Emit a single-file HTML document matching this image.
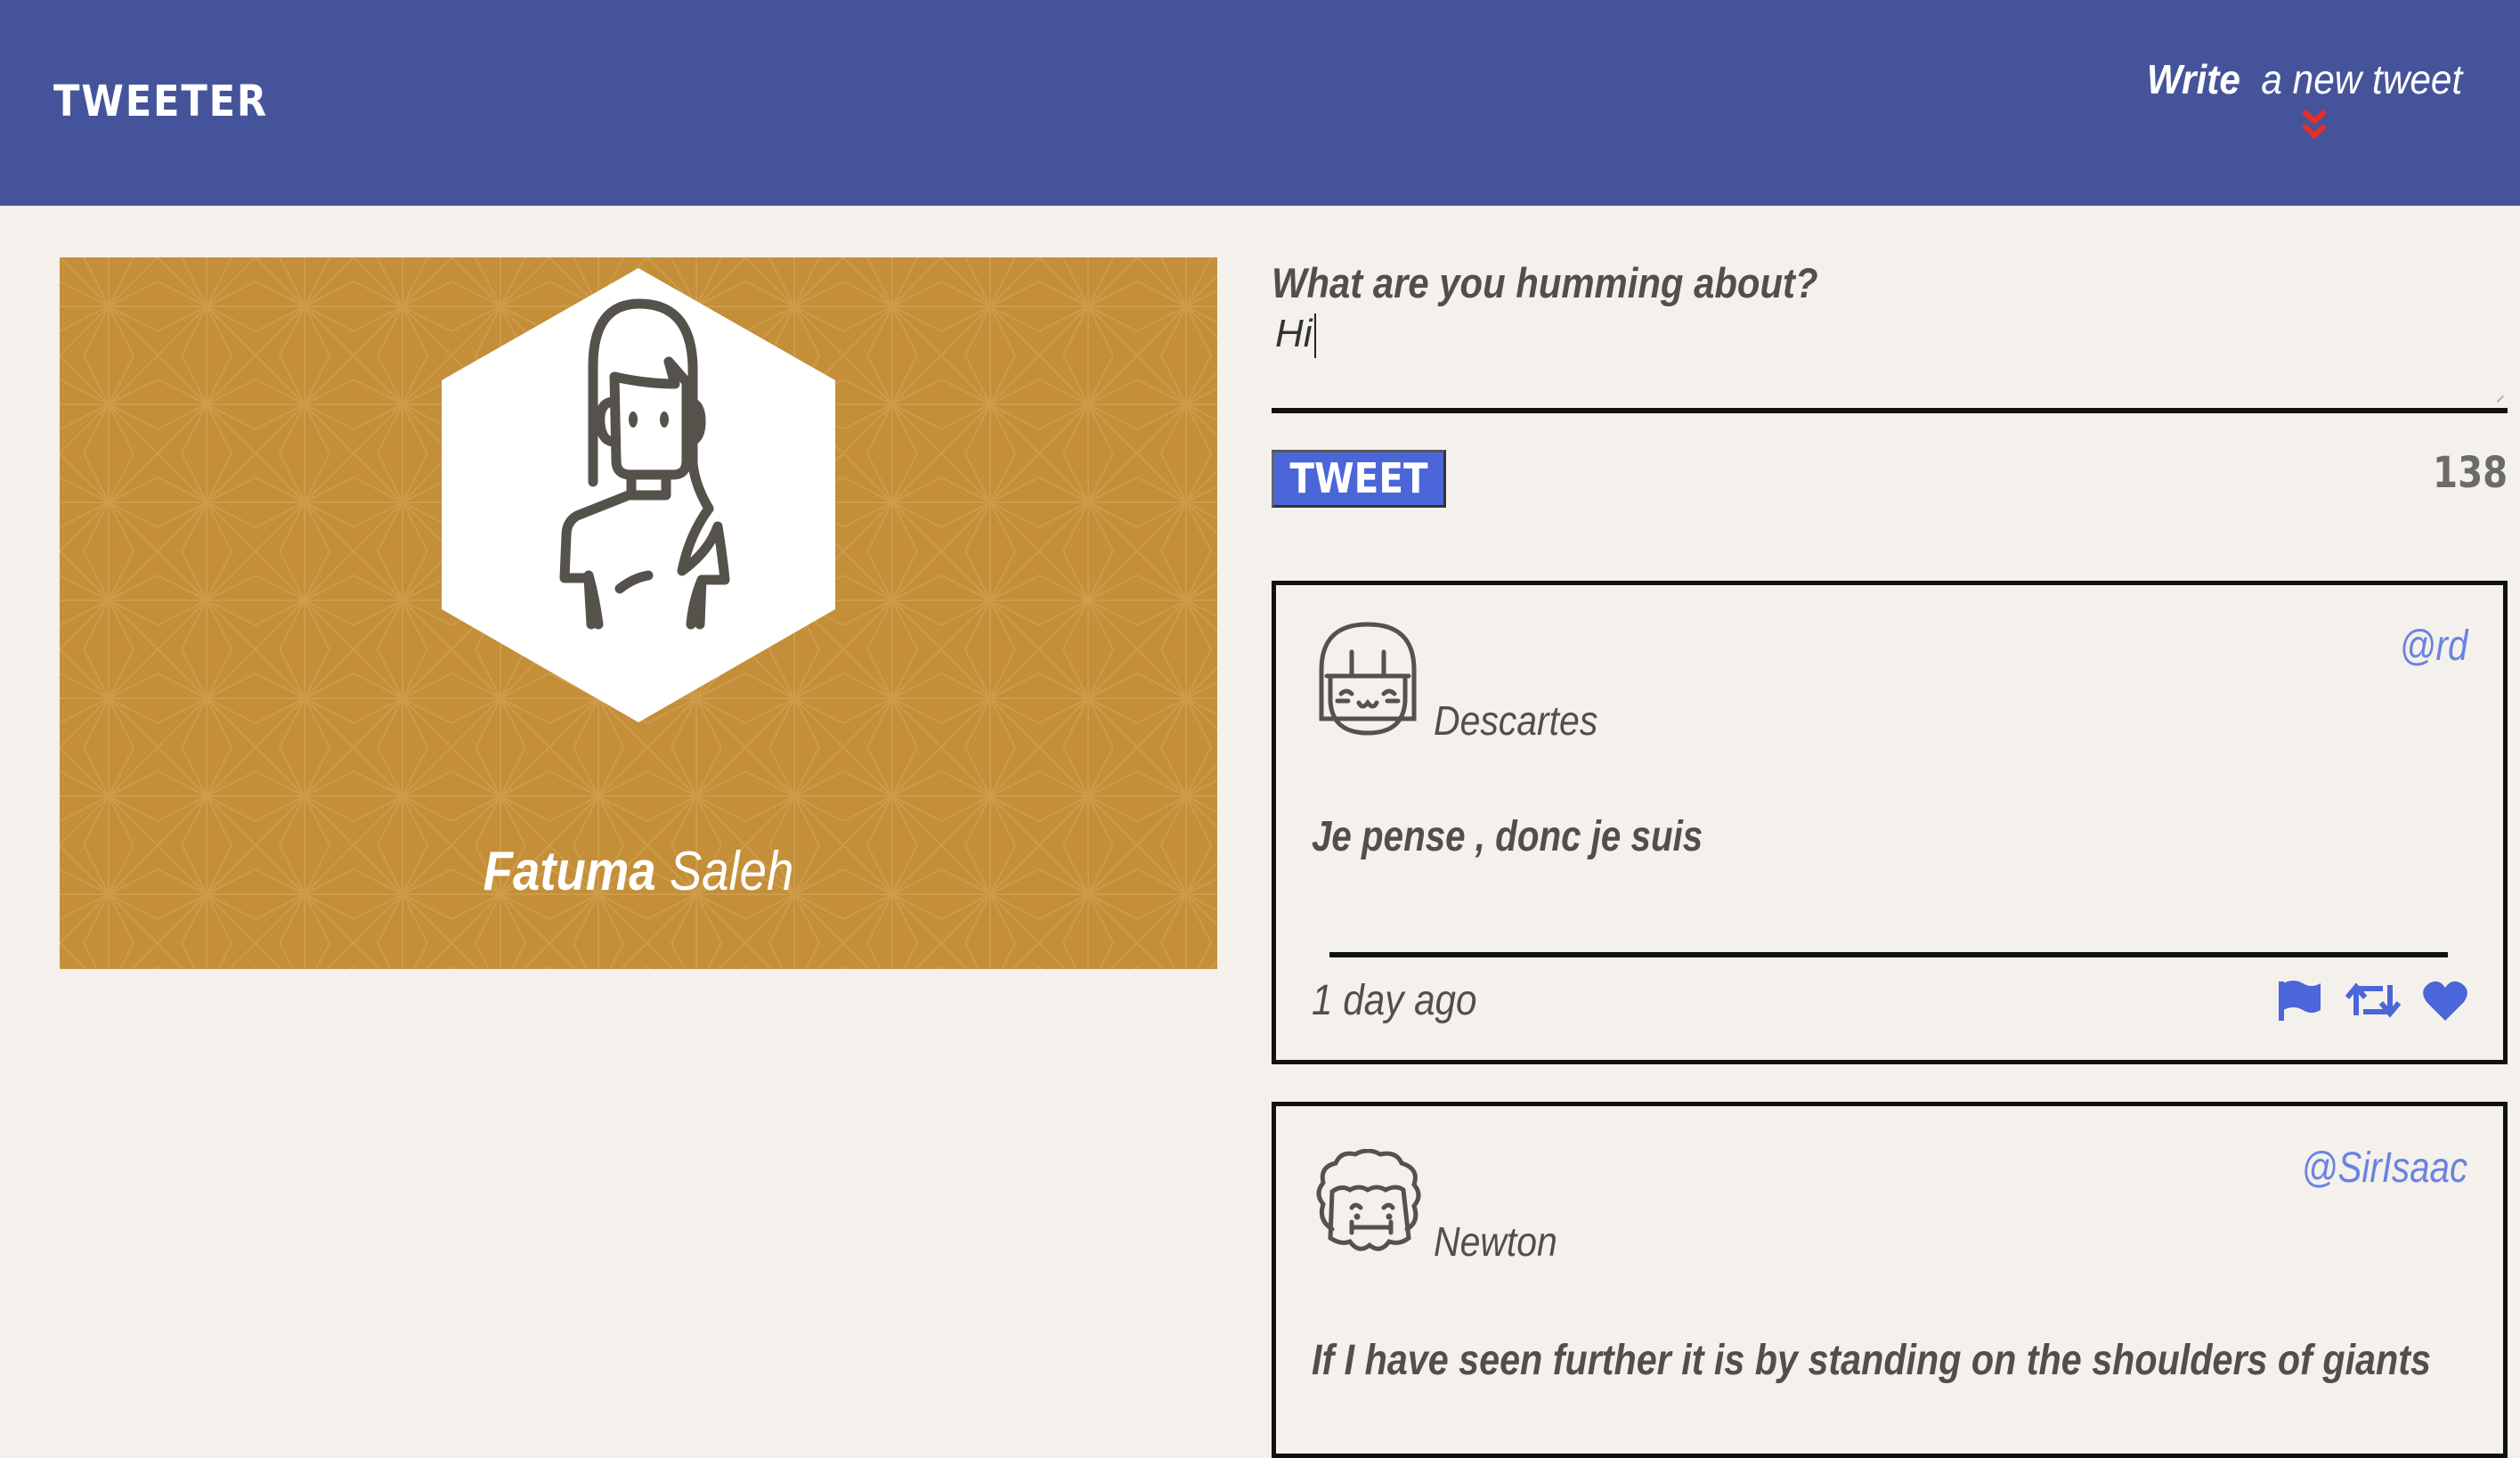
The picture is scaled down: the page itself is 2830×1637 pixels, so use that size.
<!DOCTYPE html>
<html><head><meta charset="utf-8">
<style>
*{margin:0;padding:0;box-sizing:border-box}
body{width:2830px;height:1567px;overflow:hidden;background:#f4f1ec;font-family:"Liberation Sans",sans-serif;color:#524f49;position:relative}
.a{position:absolute;white-space:nowrap}
.sq{transform:scaleX(.84);transform-origin:left top;display:block}
.sqr{transform:scaleX(.84);transform-origin:right top;display:block}
.sqc{transform:scaleX(.84);transform-origin:center top;display:block}
</style></head><body>
<div class="a" style="left:0;top:0;width:2830px;height:231px;background:#45549a"></div>
<div class="a" style="left:60px;top:86px;font-size:48px;font-weight:900;color:#fff;letter-spacing:2px;font-family:'DejaVu Sans','Liberation Sans',sans-serif"><span class="sq" style="transform:scaleX(.9)">TWEETER</span></div>
<div class="a" style="right:65px;top:62px;font-size:46px;color:#fff;font-style:italic;text-align:right"><span class="sqr" style="transform:scaleX(.92)"><b>Write</b>&nbsp; <span style="font-weight:300">a new tweet</span></span></div>
<svg class="a" style="left:2584px;top:122px" width="30" height="36" viewBox="0 0 30 36"><path d="M3 3 L15 14 L27 3 M3 19 L15 30 L27 19" stroke="#e2302a" stroke-width="6" fill="none"/></svg>

<div class="a" style="left:67px;top:289px;width:1300px;height:799px;background:#c48f38;overflow:hidden">
<svg width="1300" height="799" style="position:absolute;left:0;top:0;opacity:.18"><defs><pattern id="p" width="110" height="110" patternUnits="userSpaceOnUse"><path d="M0 0L110 110M110 0L0 110M55 0L55 110M0 55L110 55M0 27L110 83M0 83L110 27M27 0L83 110M83 0L27 110" stroke="#f0d7a0" stroke-width="2" fill="none"/></pattern></defs><rect width="1300" height="799" fill="url(#p)"/></svg>
</div>
<svg class="a" style="left:496px;top:301px" width="442" height="510" viewBox="0 0 442 510"><polygon points="221,0 442,126 442,383 221,510 0,383 0,126" fill="#fff"/>
<g stroke="#55524b" stroke-width="11" fill="none" stroke-linecap="round" stroke-linejoin="round">
<path d="M170 240 V110 Q170 40 222 40 Q280 40 282 110 V220 Q285 245 300 270"/>
<path d="M194 122 L196 216 Q196 232 212 232 H260 Q275 232 275 216 V128 L255 105 L262 130 Q230 130 194 122 Z"/>
<path d="M194 150 Q176 150 178 175 Q180 195 194 195 M276 150 Q292 150 291 175 Q290 195 276 195"/>
<path d="M213 236 V255 M252 236 V255 M213 255 H252"/>
<path d="M210 255 L152 278 Q140 285 140 300 L138 348 H165 L168 400 M165 345 Q172 370 176 400"/>
<path d="M300 270 Q278 300 270 340 Q300 318 310 290 Q315 320 318 350 H292 L290 400 M292 350 Q282 375 280 400"/>
<path d="M232 345 Q215 348 200 360"/>
</g>
<g fill="#55524b"><ellipse cx="215" cy="170" rx="5" ry="9"/><ellipse cx="250" cy="170" rx="5" ry="9"/></g>
</svg>
<div class="a" style="left:367px;top:943px;width:700px;text-align:center;font-size:62px;color:#fff;font-style:italic"><span class="sqc" style="transform:scaleX(.88)"><b>Fatuma</b> <span style="font-weight:300">Saleh</span></span></div>

<div class="a" style="left:1428px;top:290px;font-size:47px;font-weight:bold;font-style:italic"><span class="sq" style="transform:scaleX(.89)">What are you humming about?</span></div>
<div class="a" style="left:1432px;top:350px;font-size:44px;font-style:italic;color:#333;font-weight:300">Hi<span style="display:inline-block;width:2px;height:50px;background:#222;vertical-align:middle;margin-left:2px"></span></div>
<div class="a" style="left:1428px;top:458px;width:1388px;height:6px;background:#111"></div>
<div class="a" style="left:2800px;top:440px;width:10px;height:10px;border-bottom:2px solid #888;transform:rotate(-45deg);opacity:.6"></div>

<div class="a" style="left:1428px;top:505px;width:196px;height:65px;background:#4a66d8;border:3px solid #333;border-top-color:#555;border-left-color:#666;color:#fff;font-size:46px;font-weight:900;font-family:'DejaVu Sans',sans-serif;text-align:center;line-height:58px"><span class="sqc" style="transform:scaleX(.88)">TWEET</span></div>
<div class="a" style="right:14px;top:503px;text-align:right;font-size:48px;font-weight:900;color:#6b6b6b;font-family:'DejaVu Sans',sans-serif"><span class="sqr">138</span></div>

<!-- card 1 -->
<div class="a" style="left:1428px;top:652px;width:1388px;height:543px;border:5px solid #111"></div>
<svg class="a" style="left:1480px;top:697px" width="112" height="130" viewBox="0 0 112 130"><g stroke="#55524b" stroke-width="5" fill="none" stroke-linecap="round"><path d="M4 110 V55 Q4 4 56 4 Q108 4 108 55 V110 Z"/><path d="M10 62 H102 M38 35 V60 M74 35 V60"/><path d="M14 62 V90 Q16 126 56 126 Q96 126 98 90 V62"/><path d="M26 82 Q32 76 38 82 M74 82 Q80 76 86 82 M22 90 H34 M78 90 H90 M46 92 Q50 100 56 92 Q62 100 66 92"/></g></svg>
<div class="a" style="left:1610px;top:782px;font-size:46px;font-style:italic;font-weight:300"><span class="sq" style="transform:scaleX(.89)">Descartes</span></div>
<div class="a" style="right:59px;top:698px;text-align:right;font-size:48px;font-style:italic;color:#6b82e0;font-weight:300"><span class="sqr">@rd</span></div>
<div class="a" style="left:1473px;top:912px;font-size:48px;font-weight:bold;font-style:italic"><span class="sq">Je pense , donc je suis</span></div>
<div class="a" style="left:1493px;top:1069px;width:1256px;height:6px;background:#111"></div>
<div class="a" style="left:1473px;top:1096px;font-size:48px;font-style:italic;font-weight:300"><span class="sq" style="transform:scaleX(.88)">1 day ago</span></div>
<svg class="a" style="left:2558px;top:1098px" width="50" height="50" viewBox="0 0 50 50"><path d="M4 4 V48" stroke="#4a66d8" stroke-width="6"/><path d="M6 6 Q18 0 28 6 Q38 12 48 6 V36 Q38 42 28 36 Q18 30 6 36 Z" fill="#4a66d8"/></svg>
<svg class="a" style="left:2634px;top:1100px" width="62" height="46" viewBox="0 0 62 46"><g stroke="#4a66d8" stroke-width="6" fill="none"><path d="M12 40 V10 H42 M2 20 L12 8 L22 20"/><path d="M50 6 V36 H20 M40 26 L50 38 L60 26"/></g></svg>
<svg class="a" style="left:2720px;top:1100px" width="52" height="48" viewBox="0 0 52 48"><path d="M26 46 L5 25 Q-4 12 8 4 Q19 -2 26 9 Q33 -2 44 4 Q56 12 47 25 Z" fill="#4a66d8"/></svg>

<!-- card 2 -->
<div class="a" style="left:1428px;top:1237px;width:1388px;height:400px;border:5px solid #111"></div>
<svg class="a" style="left:1476px;top:1290px" width="126" height="122" viewBox="0 0 126 122"><g stroke="#55524b" stroke-width="5" fill="none" stroke-linecap="round"><path d="M20 90 Q4 80 10 62 Q0 50 10 38 Q6 20 24 16 Q30 2 46 6 Q60 -2 74 6 Q92 2 98 16 Q118 22 112 40 Q122 52 112 64 Q118 82 104 90"/><path d="M20 48 Q30 40 40 46 Q50 40 60 46 Q70 40 80 46 Q92 40 100 46"/><path d="M20 48 L18 100 Q30 108 40 104 Q50 118 62 108 Q74 118 84 104 Q96 108 106 100 L100 46"/><path d="M42 66 Q46 60 52 66 M78 66 Q84 60 88 66 M44 88 H84 M42 82 V94 M86 82 V94"/></g><circle cx="48" cy="76" r="3.5" fill="#55524b"/><circle cx="84" cy="76" r="3.5" fill="#55524b"/></svg>
<div class="a" style="left:1610px;top:1367px;font-size:46px;font-style:italic;font-weight:300"><span class="sq" style="transform:scaleX(.89)">Newton</span></div>
<div class="a" style="right:59px;top:1284px;text-align:right;font-size:48px;font-style:italic;color:#6b82e0;font-weight:300"><span class="sqr">@SirIsaac</span></div>
<div class="a" style="left:1473px;top:1500px;font-size:48px;font-weight:bold;font-style:italic"><span class="sq" style="transform:scaleX(.86)">If I have seen further it is by standing on the shoulders of giants</span></div>
</body></html>
